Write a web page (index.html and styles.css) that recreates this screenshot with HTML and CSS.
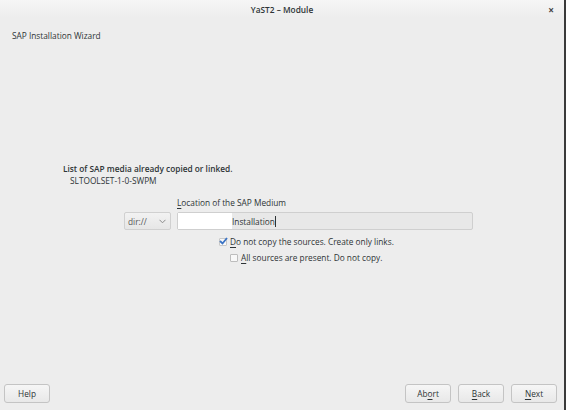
FILE: index.html
```html
<!DOCTYPE html>
<html>
<head>
<meta charset="utf-8">
<link rel="stylesheet" href="styles.css">
</head>
<body>
<div class="window">
  <div class="titlebar">
    <span class="title">YaST2 – Module</span>
    <span class="close">×</span>
  </div>
  <div class="header">SAP Installation Wizard</div>
  <div class="main">
    <div class="media">
      <div class="media-title">List of SAP media already copied or linked.</div>
      <div class="media-item">SLTOOLSET-1-0-SWPM</div>
    </div>
    <div class="location">
      <div class="combo">
        <span>dir://</span>
        <svg class="arrow" width="7" height="5" viewBox="0 0 7 5"><path d="M0.5 0.8 L3.5 3.8 L6.5 0.8" fill="none" stroke="#8a8a8a" stroke-width="1"/></svg>
      </div>
      <div class="field">
        <div class="field-label"><u>L</u>ocation of the SAP Medium</div>
        <div class="input"><span class="blank"></span><span class="value">Installation</span><span class="caret"></span></div>
      </div>
    </div>
    <div class="checks">
      <div class="check c1"><span class="box checked"><svg width="9" height="8" viewBox="0 0 9 8"><path d="M1 4 L3.5 6.5 L8 1" fill="none" stroke="#3b73c4" stroke-width="1.8"/></svg></span><span><u>D</u>o not copy the sources. Create only links.</span></div>
      <div class="check c2"><span class="box"></span><span><u>A</u>ll sources are present. Do not copy.</span></div>
    </div>
  </div>
  <div class="footer">
    <button class="btn">Help</button>
    <div class="spacer"></div>
    <button class="btn">Ab<u>o</u>rt</button>
    <button class="btn"><u>B</u>ack</button>
    <button class="btn"><u>N</u>ext</button>
  </div>
</div>
</body>
</html>
```

FILE: styles.css
```css
html, body {
  margin: 0;
  padding: 0;
}
body {
  width: 566px;
  height: 410px;
  overflow: hidden;
  font-family: "Open Sans", "Noto Sans", sans-serif;
  font-size: 8.3px;
  color: #2e3436;
}
u {
  text-decoration: underline;
  text-underline-offset: 2px;
}
.window {
  width: 564px;
  height: 410px;
  background: #ededed;
  border-right: 2px solid #3a3a3a;
  display: flex;
  flex-direction: column;
}
.titlebar {
  height: 18px;
  position: relative;
  display: flex;
  align-items: center;
  justify-content: center;
  background: linear-gradient(#f6f6f6, #ededed);
}
.title {
  font-weight: 600;
  color: #2e3436;
}
.close {
  position: absolute;
  right: 10px;
  top: 3px;
  font-weight: 700;
  font-size: 10px;
  color: #444;
}
.header {
  padding: 12px 0 0 12px;
  height: 18px;
}
.main {
  flex: 1;
  padding-top: 115px;
}
.media {
  padding-left: 63px;
}
.media-title {
  font-weight: 600;
  height: 12px;
  line-height: 12px;
}
.media-item {
  padding-left: 7px;
  height: 12px;
  line-height: 12px;
}
.location {
  display: flex;
  align-items: flex-end;
  margin-top: 10px;
  padding-left: 124px;
}
.combo {
  width: 47px;
  height: 18px;
  box-sizing: border-box;
  border: 1px solid #d0d0d0;
  border-radius: 2px;
  background: linear-gradient(#f2f2f2, #e6e6e6);
  display: flex;
  align-items: center;
  justify-content: space-between;
  padding: 0 4px 0 3px;
  color: #555;
}
.field {
  margin-left: 6px;
}
.field-label {
  height: 15px;
  line-height: 12px;
}
.input {
  width: 296px;
  height: 18px;
  box-sizing: border-box;
  border: 1px solid #cfcfcf;
  border-radius: 2px;
  background: #e8e8e8;
  display: flex;
  align-items: center;
}
.blank {
  width: 54px;
  height: 16px;
  background: #fff;
}
.value {
  color: #2e3436;
}
.caret {
  width: 1px;
  height: 11px;
  background: #2e3436;
}
.checks {
  margin-top: 4px;
}
.check {
  display: flex;
  align-items: center;
  height: 16px;
  line-height: 12px;
}
.c1 { padding-left: 219px; }
.c2 { padding-left: 230px; }
.box {
  width: 8px;
  height: 8px;
  box-sizing: border-box;
  border: 1px solid #bdbdbd;
  border-radius: 1px;
  background: #f8f8f8;
  margin-right: 3px;
  position: relative;
  flex: none;
}
.box.checked {
  border-color: #c8c8c8;
}
.box svg {
  position: absolute;
  left: -1px;
  top: -2px;
}
.footer {
  display: flex;
  align-items: center;
  padding: 0 7px 7px 4px;
  gap: 7px;
}
.spacer { flex: 1; }
.btn {
  width: 46px;
  height: 19px;
  border: 1px solid #c4c4c4;
  border-radius: 3px;
  background: linear-gradient(#f6f6f6, #e8e8e8);
  font-family: inherit;
  font-size: 8.3px;
  color: #2e3436;
  padding: 0;
}
```
